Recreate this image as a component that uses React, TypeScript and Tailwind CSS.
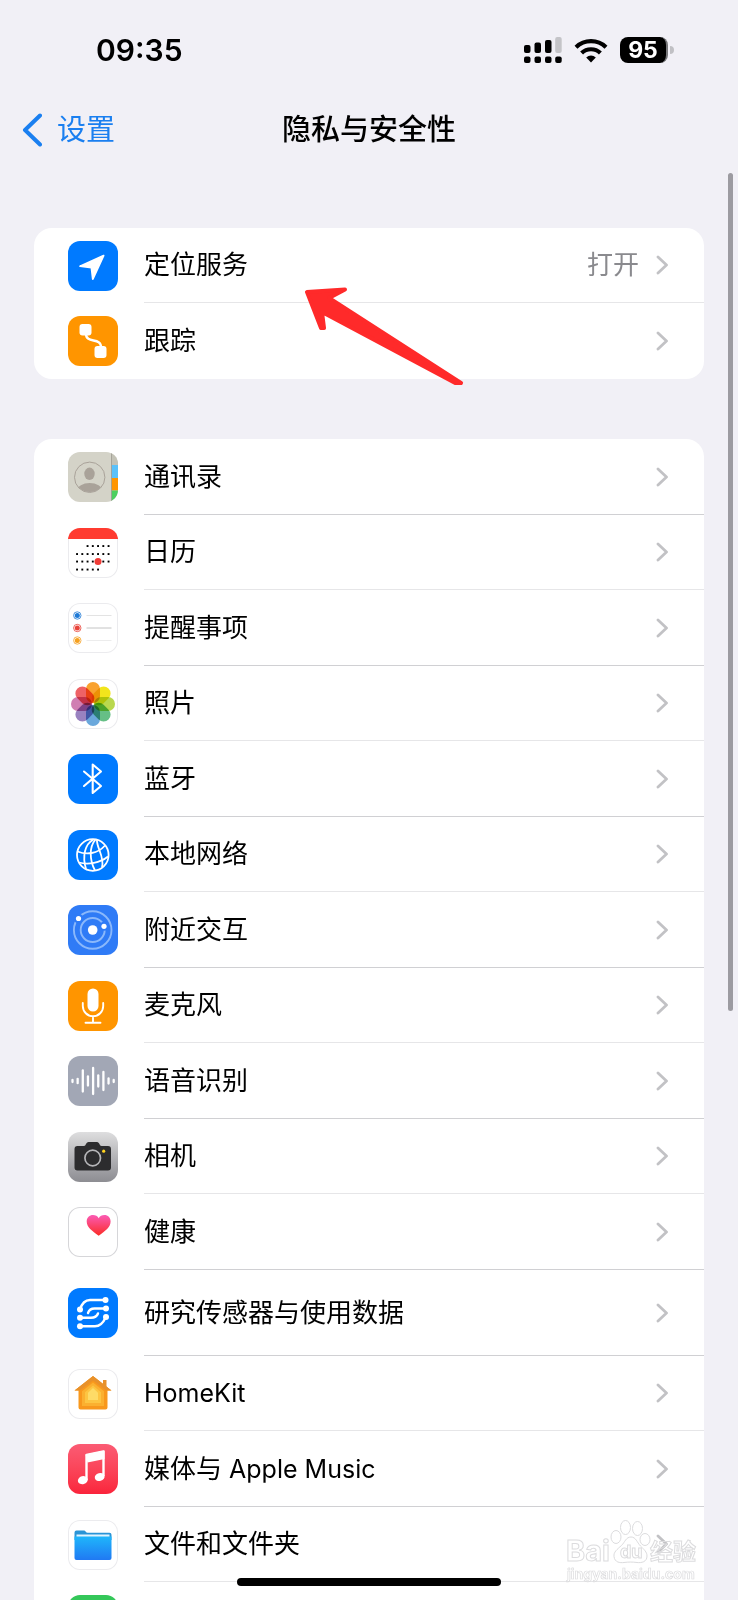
import type { ReactNode } from "react";

type Item = {
  id: string;
  label: ReactNode;
  icon: ReactNode;
  value?: string;
  size?: "short" | "regular" | "tall";
};

function Tile({ className, children }: { className: string; children: ReactNode }) {
  return (
    <span className={`block size-[50px] shrink-0 overflow-hidden rounded-xl ${className}`}>
      <svg viewBox="0 0 50 50" className="size-full" fill="none" aria-hidden="true">
        {children}
      </svg>
    </span>
  );
}

const white = "bg-white ring-1 ring-inset ring-[#ebebee]";

const LocationIcon = (
  <Tile className="bg-[#007aff]">
    <path d="M35.6 14.6 12 25.2l11.4 1.3 1.4 11.6z" fill="#fff" stroke="#fff" strokeWidth="1.8" strokeLinejoin="round" />
  </Tile>
);

const TrackingIcon = (
  <Tile className="bg-[#ff9500]">
    <rect x="11.5" y="8" width="12" height="11.5" rx="3" fill="#fff" />
    <rect x="26.5" y="30" width="12" height="12" rx="3" fill="#fff" />
    <path d="M18 18c0 10 15 3 15 13" stroke="#fff" strokeWidth="2.4" />
  </Tile>
);

const ContactsIcon = (
  <Tile className="bg-[#d4d3c8]">
    <path d="M43.5 0H50v13h-6.5z" fill="#c3c2b6" />
    <path d="M43.5 13H50v13h-6.5z" fill="#5ac1fa" />
    <path d="M43.5 26H50v12.5h-6.5z" fill="#ff9500" />
    <path d="M43.5 38.5H50V50h-6.5z" fill="#4cd05f" />
    <path d="M43.5 0v50" stroke="#9c9b90" strokeWidth="0.8" />
    <clipPath id="face">
      <circle cx="21.7" cy="25.3" r="14.8" />
    </clipPath>
    <g clipPath="url(#face)" fill="#a9a299">
      <ellipse cx="21.5" cy="21.8" rx="5.2" ry="6.2" />
      <ellipse cx="21.7" cy="39" rx="12.5" ry="8" />
    </g>
    <circle cx="21.7" cy="25.3" r="15.2" stroke="#a9a299" strokeWidth="1" />
  </Tile>
);

const calendarRows = [
  { y: 18, from: 2, to: 6 },
  { y: 26, from: 0, to: 6 },
  { y: 33.5, from: 0, to: 6 },
  { y: 41.5, from: 0, to: 4 },
];

const CalendarIcon = (
  <Tile className={white}>
    <path d="M0 0h50v11H0z" fill="#ff3b30" />
    {calendarRows.map((r) =>
      [0, 1, 2, 3, 4, 5, 6]
        .filter((c) => c >= r.from && c <= r.to)
        .map((c) => <rect key={`${r.y}-${c}`} x={8.1 + c * 5.25} y={r.y - 0.9} width="1.9" height="1.9" fill="#000" />),
    )}
    <circle cx="30" cy="33.5" r="3.5" fill="#f03b36" />
  </Tile>
);

const RemindersIcon = (
  <Tile className={white}>
    {[
      { y: 12.5, c: "#1f7ad6", l: "#e3e3e3" },
      { y: 25, c: "#e8443a", l: "#c4c4c4" },
      { y: 37.5, c: "#f5a01f", l: "#ececec" },
    ].map((r) => (
      <g key={r.y}>
        <circle cx="9.3" cy={r.y} r="3.7" stroke={r.c} strokeWidth="0.8" />
        <circle cx="9.3" cy={r.y} r="2.5" fill={r.c} />
        <path d={`M18.5 ${r.y}h25`} stroke={r.l} strokeWidth="1" />
      </g>
    ))}
  </Tile>
);

const PhotosIcon = (
  <Tile className={white}>
    {["#f9a22f", "#f2e51c", "#b9d84e", "#66bf86", "#6aa8dc", "#9982c0", "#d07fb2", "#ee6265"].map((c, i) => (
      <rect
        key={c}
        x="-7"
        y="-22"
        width="14"
        height="21"
        rx="7"
        fill={c}
        className="mix-blend-multiply"
        transform={`translate(25 25) rotate(${i * 45})`}
      />
    ))}
  </Tile>
);

const BluetoothIcon = (
  <Tile className="bg-[#007aff]">
    <path
      d="M16 17.5 33 32l-8.3 7V10.500l8.300 7L16 32"
      stroke="#fff"
      strokeWidth="2.1"
      strokeLinejoin="round"
      strokeLinecap="round"
    />
  </Tile>
);

const NetworkIcon = (
  <Tile className="bg-[#007aff]">
    <g stroke="#fff" strokeWidth="1.8">
      <circle cx="24.8" cy="25" r="15.8" />
      <path d="M25.500 9.500C17 14 14 26 18 39" />
      <path d="M27.500 9.500C21 17 21.500 30 27 40.500" />
      <path d="M29 9.500C28 17 37 27 34 37.500" />
      <path d="M9.500 21.500c9 3.500 20 2.500 27.500-6" />
      <path d="M11 32.500c9 2.500 21 .5 29-6" />
    </g>
  </Tile>
);

const NearbyIcon = (
  <Tile className="bg-[#2f7bf6]">
    <circle cx="24.7" cy="25" r="18.8" stroke="#8ab8fb" strokeWidth="1.9" />
    <circle cx="24.7" cy="25" r="12" stroke="#8ab8fb" strokeWidth="1.9" />
    <circle cx="10.5" cy="13.5" r="4.8" fill="#2f7bf6" />
    <circle cx="36" cy="21.3" r="4.5" fill="#2f7bf6" />
    <circle cx="10.5" cy="13.5" r="2.6" fill="#fff" />
    <circle cx="36" cy="21.3" r="2.6" fill="#fff" />
    <circle cx="24.7" cy="25" r="4.8" fill="#fff" />
  </Tile>
);

const MicIcon = (
  <Tile className="bg-[#ff9500]">
    <rect x="19.5" y="7.5" width="11" height="23" rx="5.5" fill="#fff" />
    <path
      d="M14.8 22v3a10.200 10.200 0 0 0 20.400 0v-3M25 35.500V41.500M17.500 41.800h15"
      stroke="#fff"
      strokeWidth="1.9"
      strokeLinecap="round"
    />
  </Tile>
);

const SpeechIcon = (
  <Tile className="bg-[#a2a7b5]">
    {[1, 2.2, 10.5, 4.5, 13, 5.5, 9, 2.5, 1].map((h, i) => (
      <path key={i} d={`M${4.5 + i * 5.15} ${25 - h}v${h * 2}`} stroke="#fff" strokeWidth="2.3" strokeLinecap="round" />
    ))}
  </Tile>
);

const CameraIcon = (
  <Tile className="bg-linear-to-b from-[#dededf] to-[#8d8d92]">
    <path
      d="M9.500 14H16c2 0 2-4 4.500-4h8.500c2.500 0 2.500 4 4.500 4h6.500a3 3 0 0 1 3 3v18.500a3 3 0 0 1-3 3h-30.500a3 3 0 0 1-3-3V17a3 3 0 0 1 3-3z"
      fill="#2c2c2e"
    />
    <circle cx="24.7" cy="26" r="7.8" stroke="#b5b5b8" strokeWidth="1.7" />
    <circle cx="35.7" cy="19.2" r="1.6" fill="#ffd21f" />
  </Tile>
);

const HealthIcon = (
  <Tile className="bg-white ring-1 ring-inset ring-[#d6d6d9]">
    <linearGradient id="heart" x1="0" y1="0" x2="0" y2="1">
      <stop stopColor="#fb5bb5" />
      <stop offset="1" stopColor="#fb2c26" />
    </linearGradient>
    <path
      d="M30.700 28.700C24 24 18.700 20 18.700 14.500 18.700 10.500 21.500 8 25 8c2.500 0 4.600 1.200 5.700 3.200C31.800 9.200 33.900 8 36.400 8c3.500 0 6.200 2.500 6.200 6.500 0 5.500-5.200 9.500-11.900 14.200z"
      fill="url(#heart)"
    />
  </Tile>
);

const ResearchIcon = (
  <Tile className="bg-[#007aff]">
    <g stroke="#fff" strokeWidth="2.4" strokeLinecap="round">
      <path d="M12 21.500C14 15 17 12 22 12H37.500" />
      <path d="M12 29.700h11c4 0 6-1.500 7-4.200" />
      <path d="M20 25c1-3 3-4.500 6.500-4.500h12" />
      <path d="M12 38.200H27c5 0 8-3 10.500-8.500" />
    </g>
    <g fill="#fff">
      <circle cx="37.5" cy="12" r="3" />
      <circle cx="12" cy="21.5" r="3" />
      <circle cx="38" cy="20.5" r="3" />
      <circle cx="12" cy="29.7" r="3" />
      <circle cx="38" cy="29" r="3" />
      <circle cx="12" cy="38.2" r="3" />
    </g>
  </Tile>
);

const HomeIcon = (
  <Tile className={white}>
    <path d="M35 11h3.500v8H35z" fill="#e8912a" />
    <path d="M25 7 43.500 21.500H39.500V38.500a2 2 0 0 1-2 2h-25a2 2 0 0 1-2-2V21.500H6.500z" fill="#f8981d" />
    <path d="M25 7 43.500 21.500H38L25 11.500 12 21.500H6.500z" fill="#e8912a" />
    <path d="m25 13.500 11 8.800V37H14V22.300z" fill="#fbb030" />
    <path d="m25 16.500 8 6.800V34H17V23.300z" fill="#fdc542" />
    <path d="m25 19 5 4.800V31H20v-7.200z" fill="#fedb67" />
  </Tile>
);

const MusicIcon = (
  <Tile className="bg-linear-to-b from-[#fb5b74] to-[#fa233b]">
    <path d="M18.500 36V11l17-3.500V32" stroke="#fff" strokeWidth="2.4" strokeLinejoin="round" />
    <path d="M17.500 10.500 36.500 6.500v8.500l-17 3.500z" fill="#fff" />
    <ellipse cx="14.8" cy="36.2" rx="5" ry="4" fill="#fff" transform="rotate(-15 14.8 36.2)" />
    <ellipse cx="31.7" cy="33" rx="5" ry="4" fill="#fff" transform="rotate(-15 31.7 33)" />
  </Tile>
);

const FilesIcon = (
  <Tile className={white}>
    <linearGradient id="folder" x1="0" y1="0" x2="0" y2="1">
      <stop stopColor="#1fb6fb" />
      <stop offset="1" stopColor="#2079f3" />
    </linearGradient>
    <path d="M6.500 12.500a2 2 0 0 1 2-2h7.500c1.500 0 2 2.300 3.500 2.300h22a2 2 0 0 1 2 2V20h-37z" fill="#2a94d6" />
    <path d="M8.500 14.500h33V20h-33z" fill="#dff3ff" />
    <path d="M6.500 16.500h37V38a2 2 0 0 1-2 2h-33a2 2 0 0 1-2-2z" fill="url(#folder)" />
  </Tile>
);

function Latin({ children }: { children: ReactNode }) {
  return <span className="text-[25px]">{children}</span>;
}

const general: Item[] = [
  { id: "location", label: "定位服务", icon: LocationIcon, value: "打开", size: "short" },
  { id: "tracking", label: "跟踪", icon: TrackingIcon },
];

const apps: Item[] = [
  { id: "contacts", label: "通讯录", icon: ContactsIcon },
  { id: "calendar", label: "日历", icon: CalendarIcon, size: "short" },
  { id: "reminders", label: "提醒事项", icon: RemindersIcon },
  { id: "photos", label: "照片", icon: PhotosIcon, size: "short" },
  { id: "bluetooth", label: "蓝牙", icon: BluetoothIcon },
  { id: "network", label: "本地网络", icon: NetworkIcon, size: "short" },
  { id: "nearby", label: "附近交互", icon: NearbyIcon },
  { id: "microphone", label: "麦克风", icon: MicIcon, size: "short" },
  { id: "speech", label: "语音识别", icon: SpeechIcon },
  { id: "camera", label: "相机", icon: CameraIcon, size: "short" },
  { id: "health", label: "健康", icon: HealthIcon },
  { id: "research", label: "研究传感器与使用数据", icon: ResearchIcon, size: "tall" },
  { id: "homekit", label: <Latin>HomeKit</Latin>, icon: HomeIcon, size: "short" },
  { id: "music", label: <>媒体与<Latin> Apple Music</Latin></>, icon: MusicIcon },
  { id: "files", label: "文件和文件夹", icon: FilesIcon, size: "short" },
];

const rowHeight = { short: "h-[75px]", regular: "h-[76px]", tall: "h-[86px]" };
const rowLine = {
  short: "border-b border-[#e6e6e8]",
  regular: "border-b border-[#d0d0d3]",
  tall: "border-b border-[#d0d0d3]",
};

function Chevron() {
  return (
    <svg viewBox="0 0 12 20" className="h-5 w-3 shrink-0" fill="none" aria-hidden="true">
      <path d="M2 2l8.5 8L2 18" stroke="#c2c2c5" strokeWidth="2.8" strokeLinecap="round" strokeLinejoin="round" />
    </svg>
  );
}

function Row({ item, last }: { item: Item; last?: boolean }) {
  const size = item.size ?? "regular";
  return (
    <li>
      <a href={`#${item.id}`} className={`flex items-center gap-[26px] pl-[34px] ${rowHeight[size]}`}>
        {item.icon}
        <span className={`flex h-full min-w-0 flex-1 items-center gap-[17px] pr-9 ${last ? "" : rowLine[size]}`}>
          <span className="flex-1 truncate text-[26px] leading-9 text-black">{item.label}</span>
          {item.value && <span className="text-[26px] leading-9 text-[#8a8a8e]">{item.value}</span>}
          <Chevron />
        </span>
      </a>
    </li>
  );
}

function StatusBar() {
  return (
    <div className="flex h-[100px] shrink-0 items-center justify-between pr-16 pl-24">
      <time className="text-[30px] leading-9 font-semibold">09:35</time>
      <div className="flex items-center gap-3">
        <svg viewBox="0 0 38 26" className="h-[26px] w-[38px]" aria-hidden="true">
          <rect x="0" y="8" width="6.5" height="8" rx="2" />
          <rect x="10.5" y="5.5" width="6.5" height="10.5" rx="2" />
          <rect x="21" y="3" width="6.5" height="13" rx="2" />
          <rect x="31.2" y="0" width="6.5" height="16" rx="2" fill="#c4c4c8" />
          {[0, 10.5, 21, 31.2].map((x) => (
            <rect key={x} x={x} y="19.5" width="6.5" height="6.5" rx="2" />
          ))}
        </svg>
        <svg viewBox="0 0 34 25" className="h-[25px] w-[34px]" fill="none" aria-hidden="true">
          <path d="M2 9.200a21.600 21.600 0 0 1 30 0" stroke="#000" strokeWidth="4.200" />
          <path d="M7.600 15a13.600 13.600 0 0 1 18.800 0" stroke="#000" strokeWidth="4.200" />
          <path d="M17 24.500l-4.800-5a7 7 0 0 1 9.600 0z" fill="#000" />
        </svg>
        <div className="flex items-center gap-0.5">
          <span className="flex h-[26px] w-12 items-center justify-center rounded-lg border-r-2 border-[#77777a] bg-black text-[23px] leading-6 font-bold text-white">
            95
          </span>
          <span className="h-2 w-1 rounded-r-full bg-[#c0c0c4]" />
        </div>
      </div>
    </div>
  );
}

function Watermark() {
  return (
    <svg
      viewBox="0 0 140 68"
      className="absolute right-9 bottom-4 h-[68px] w-[140px]"
      fill="none"
      stroke="#dcdcde"
      strokeWidth="1"
      aria-hidden="true"
    >
      <text className="font-['Inter','Noto_Sans_CJK_SC',sans-serif] font-bold">
        <tspan x="4" y="45" fontSize="29">Bai</tspan>
        <tspan x="58" y="42" fontSize="18">du</tspan>
        <tspan x="88" y="44" fontSize="23">经验</tspan>
        <tspan x="5" y="63" fontSize="14" strokeWidth="0.7">jingyan.baidu.com</tspan>
      </text>
      <ellipse cx="54" cy="21" rx="5" ry="6.5" />
      <ellipse cx="63.5" cy="11.5" rx="5" ry="7" />
      <ellipse cx="75.5" cy="12.5" rx="5" ry="7" />
      <ellipse cx="83" cy="23.5" rx="5" ry="6" />
      <path d="M69 21c-5 0-6 5-9.500 8.500C55 33.500 51.500 36 52 40.500c.7 6 6 6.500 10 6 5-.6 8-.6 13 0 4.500.5 10-.500 10-6.500 0-4-3-6.500-6.500-10S74 21 69 21z" />
    </svg>
  );
}

export default function App() {
  return (
    <div className="relative flex h-screen flex-col overflow-hidden bg-[#f1f0f6] font-['Inter','Noto_Sans_CJK_SC',sans-serif] text-black">
      <StatusBar />
      <header className="grid h-[60px] shrink-0 grid-cols-[1fr_auto_1fr] items-center px-[22px]">
        <a href="#settings" className="flex items-center gap-[15px] text-[29px] leading-10 text-[#1a7ff0]">
          <svg viewBox="0 0 20 34" className="h-[34px] w-5" fill="none" aria-hidden="true">
            <path
              d="M18 2.500 3 17l15 14.500"
              stroke="currentColor"
              strokeWidth="4"
              strokeLinecap="round"
              strokeLinejoin="round"
            />
          </svg>
          设置
        </a>
        <h1 className="text-[29px] leading-10 font-medium">隐私与安全性</h1>
      </header>

      <main className="flex shrink-0 flex-col gap-[60px] px-[34px] pt-[68px]">
        <ul className="overflow-hidden rounded-[18px] bg-white">
          {general.map((item, i) => (
            <Row key={item.id} item={item} last={i === general.length - 1} />
          ))}
        </ul>
        <ul className="overflow-hidden rounded-[18px] bg-white">
          {apps.map((item) => (
            <Row key={item.id} item={item} />
          ))}
          <li className="flex h-[76px] items-center pl-[34px]">
            <span className="size-[50px] rounded-xl bg-[#34c759]" />
          </li>
        </ul>
      </main>

      <svg viewBox="0 0 160 100" className="absolute top-[285px] left-[304px] h-[100px] w-[160px]" aria-hidden="true">
        <path
          d="M3 6 41 3.500 25 12 157 97 155 99 18 26 20 42 17 42Z"
          fill="#ff2a2a"
          stroke="#ff2a2a"
          strokeWidth="4"
          strokeLinejoin="round"
          className="translate-y-px"
        />
      </svg>
      <span className="absolute top-[173px] right-[5px] h-[838px] w-[5px] rounded-full bg-[#9c9ba1]" />
      <Watermark />
      <span className="absolute bottom-3.5 left-1/2 h-2 w-[264px] -translate-x-1/2 rounded-full bg-black" />
    </div>
  );
}
